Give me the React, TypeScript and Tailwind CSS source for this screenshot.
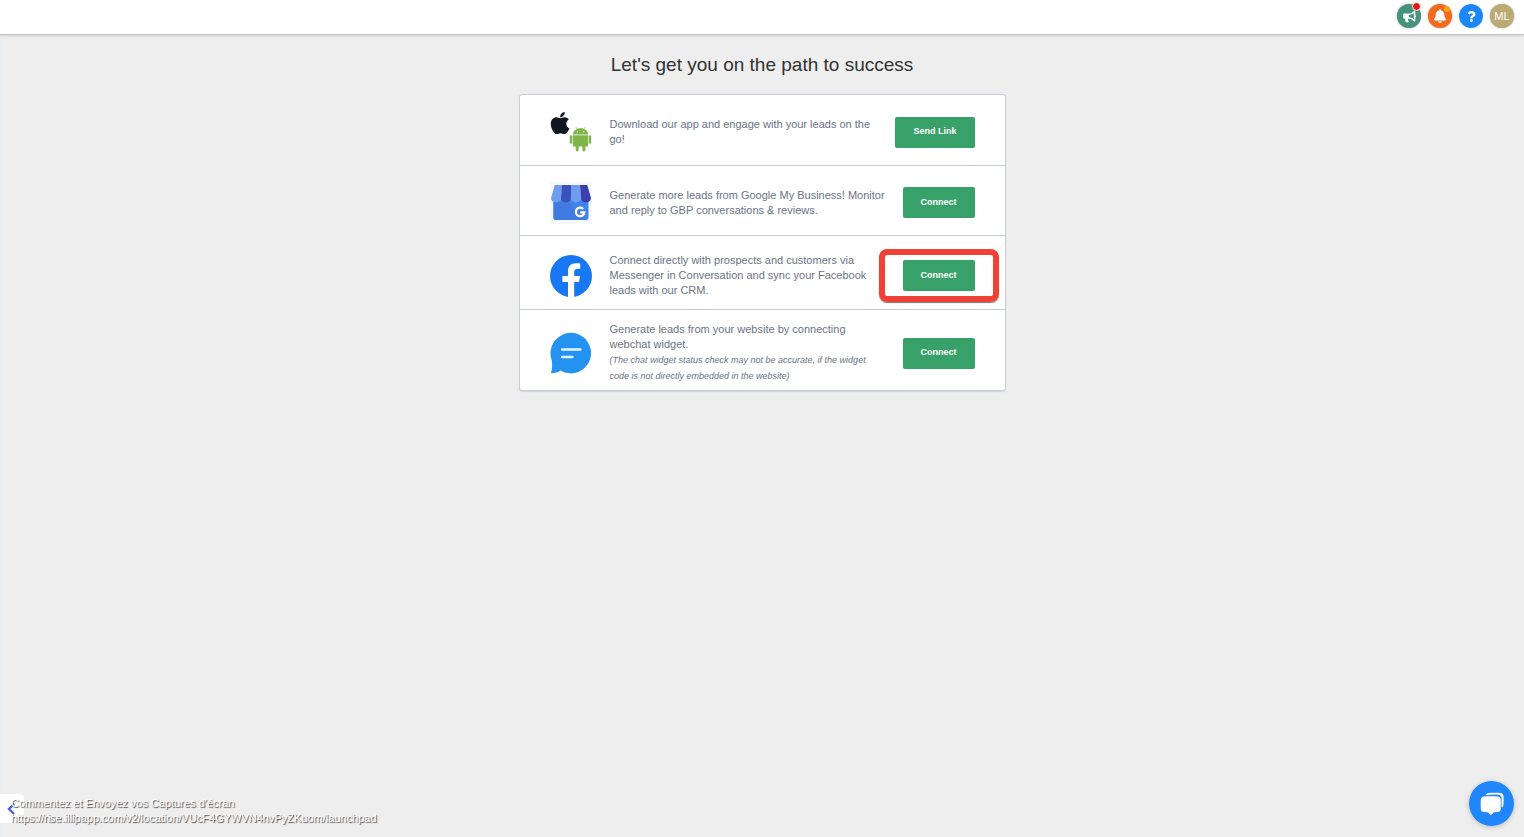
import type { ReactNode } from "react"
import { FaBell, FaBullhorn, FaQuestion } from "react-icons/fa"

function MobileIcon() {
  return (
    <svg viewBox="0 0 42 42" className="size-[42px]" aria-hidden>
      <g transform="translate(.6 -.6) scale(.0494 .0494)" fill="#10161f">
        <path d="M318.700 268.700c-.2-36.700 16.400-64.400 50-84.800-18.800-26.900-47.200-41.700-84.700-44.600-35.500-2.800-74.300 20.700-88.500 20.700-15 0-49.400-19.700-76.400-19.700C63.300 141.200 4 184.800 4 273.500q0 39.300 14.400 81.200c12.800 36.700 59 126.700 107.200 125.200 25.200-.6 43-17.900 75.800-17.900 31.800 0 48.300 17.900 76.400 17.900 48.600-.7 90.400-82.500 102.600-119.300-65.200-30.700-61.700-90-61.700-91.900zM262.100 104.500c27.300-32.400 24.800-61.900 24-72.500-24.100 1.400-52 16.400-67.900 34.900-17.500 19.800-27.800 44.300-25.600 71.900 26.100 2 49.900-11.400 69.500-34.300z" />
      </g>
      <g fill="#80b54a">
        <path d="M22.800 23.600c.3-4 3.500-6.400 7.700-6.400s7.400 2.400 7.700 6.400z" />
        <path d="m25.700 15.800 2 3M35.300 15.800l-2 3" stroke="#80b54a" strokeWidth=".6" />
        <path d="M22.800 24.300h15.400v9.700a1.500 1.500 0 0 1-1.500 1.500H24.300a1.500 1.500 0 0 1-1.500-1.500z" />
        <rect x="19.800" y="24.200" width="2.400" height="8.600" rx="1.200" />
        <rect x="38.800" y="24.200" width="2.400" height="8.600" rx="1.200" />
        <rect x="25.700" y="33" width="3" height="7.400" rx="1.300" />
        <rect x="32.400" y="33" width="3" height="7.400" rx="1.300" />
      </g>
      <circle cx="27.400" cy="20.700" r=".7" fill="#fff" />
      <circle cx="33.600" cy="20.700" r=".7" fill="#fff" />
    </svg>
  )
}

function BusinessIcon() {
  return (
    <svg viewBox="0 0 42 42" className="size-[42px]" aria-hidden>
      <path d="M0 0h42v42H0z" fill="#f7f8fb" />
      <path d="M3.500 17h35v18.500a2.500 2.500 0 0 1-2.500 2.500H6a2.500 2.500 0 0 1-2.500-2.500z" fill="#4282ea" />
      <path d="m18 20 18 18H6a2.500 2.500 0 0 1-2.500-2.500V20z" fill="#3f7be0" />
      <path d="M4.800 3h7L11 16c0 2.500-2 4.400-5 4.400S1 18.500 1 16z" fill="#6e9df0" />
      <path d="M11.800 3H21v13c0 2.500-2.200 4.400-5 4.400S11 18.500 11 16z" fill="#3b51bb" />
      <path d="M21 3h9l1 13c0 2.500-2.200 4.400-5 4.400S21 18.500 21 16z" fill="#6e9df0" />
      <path d="M30 3h7.200L41 16c0 2.500-2.200 4.400-5 4.400S31 18.500 31 16z" fill="#3a3fae" />
      <path d="M33.200 26.900a4.300 4.300 0 1 0 1.200 3.500h-4.200" fill="none" stroke="#fff" strokeWidth="2.200" />
    </svg>
  )
}

function FacebookIcon() {
  return (
    <svg viewBox="0 0 42 42" className="size-[42px]" aria-hidden>
      <circle cx="21" cy="21" r="21" fill="#1877f2" />
      <path
        d="M18 42V27.100h-5.600V21H18v-4.700c0-5.300 3.100-8.100 7.900-8.100 1.600 0 3 .1 4.300.3v5.300h-2.700c-2.400 0-3.300 1.400-3.300 3.100V21H30l-1 6.100h-4.800V42z"
        fill="#fff"
      />
    </svg>
  )
}

function WebchatIcon() {
  return (
    <svg viewBox="0 0 42 42" className="size-[42px]" aria-hidden>
      <path
        d="M21 .8A20.300 20.300 0 1 1 10.500 38.600C8 40.600 4 41.500.8 41.200 2.300 37.500 2.300 33 1.800 28.500A20.500 20.500 0 0 1 21 .8z"
        fill="#2492f0"
      />
      <path d="M12 17.500h18.500M12 25h10.500" stroke="#e8f7ff" strokeWidth="2.300" strokeLinecap="round" />
    </svg>
  )
}

type Step = {
  icon: ReactNode
  text: string
  note?: string
  action: string
  row: string
  highlighted?: boolean
}

const steps: Step[] = [
  {
    icon: <MobileIcon />,
    text: "Download our app and engage with your leads on the go!",
    action: "Send Link",
    row: "min-h-[71px] pt-1",
  },
  {
    icon: <BusinessIcon />,
    text: "Generate more leads from Google My Business! Monitor and reply to GBP conversations & reviews.",
    action: "Connect",
    row: "min-h-[70px] pt-1",
  },
  {
    icon: <FacebookIcon />,
    text: "Connect directly with prospects and customers via Messenger in Conversation and sync your Facebook leads with our CRM.",
    action: "Connect",
    row: "min-h-[74px] pt-1.5",
    highlighted: true,
  },
  {
    icon: <WebchatIcon />,
    text: "Generate leads from your website by connecting webchat widget.",
    note: "(The chat widget status check may not be accurate, if the widget code is not directly embedded in the website)",
    action: "Connect",
    row: "min-h-[80px] pt-1.5",
  },
]

function StepRow({ icon, text, note, action, row, highlighted }: Step) {
  return (
    <li className={`flex items-center px-[30px] ${row}`}>
      <div className="shrink-0">{icon}</div>
      <div className="ml-[18px] w-[277px] text-[11px] leading-[15px] text-[#6b7385]">
        <p>{text}</p>
        {note && <p className="text-[9px] leading-4 italic">{note}</p>}
      </div>
      <div className="relative ml-auto shrink-0">
        <button
          type="button"
          className="block h-[31px] rounded-xs bg-[#38a169] px-[18px] text-[9px] font-bold text-white"
        >
          {action}
        </button>
        {highlighted && (
          <span
            className="pointer-events-none absolute -inset-x-6 -inset-y-[11px] rounded-lg border-6 border-[#ef4136] shadow-[0_1px_1px_#777]"
            aria-hidden
          />
        )}
      </div>
    </li>
  )
}

export default function App() {
  return (
    <div className="relative flex min-h-screen flex-col bg-[#eeeeee] font-['Liberation_Sans',Arial,sans-serif] shadow-[inset_1px_0_0_#e3eef7]">
      <header className="flex h-[35px] items-center justify-end gap-[7px] border-b border-[#c4c4c4] bg-white px-[10px] pb-0.5 shadow-[0_1px_2px_#d0d0d0]">
        <button
          type="button"
          aria-label="Announcements"
          className="relative grid size-6 place-items-center rounded-full bg-[#46937b] text-white shadow-[0_0_2px_#999]"
        >
          <FaBullhorn size={13} />
          <span className="absolute -top-0.5 right-0 size-[9px] rounded-full border border-white bg-[#e81313]" />
        </button>
        <button
          type="button"
          aria-label="Notifications"
          className="relative grid size-6 place-items-center rounded-full bg-[#f56a1d] text-white shadow-[0_0_2px_#999]"
        >
          <FaBell size={14} />
          <span className="absolute top-0.5 right-0.5 size-1.5 rounded-full bg-[#fba21c]" />
        </button>
        <button
          type="button"
          aria-label="Help"
          className="grid size-6 place-items-center rounded-full bg-[#1b87fb] text-white"
        >
          <FaQuestion size={11} />
        </button>
        <button
          type="button"
          className="grid size-6 place-items-center rounded-full bg-[#bbab72] text-[11px] text-white shadow-[0_0_2px_#999]"
        >
          ML
        </button>
      </header>

      <main className="flex flex-col items-center pt-[18px]">
        <h1 className="text-[19px] leading-6 text-[#333333]">Let's get you on the path to success</h1>
        <ul className="mt-[17px] w-full max-w-[487px] divide-y divide-[#c9cfd6] rounded-[3px] border border-[#c9cfd6] bg-white shadow-[0_1px_1px_#cfd3da]">
          {steps.map((step) => (
            <StepRow key={step.text} {...step} />
          ))}
        </ul>
      </main>

      <button
        type="button"
        aria-label="Expand menu"
        className="absolute bottom-[14px] left-0 flex h-[29px] w-6 items-center rounded-r-sm bg-white pl-[7px]"
      >
        <svg viewBox="0 0 8 12" className="h-3 w-2" aria-hidden>
          <path d="M7 1 2 6l5 5" fill="none" stroke="#4d62d9" strokeWidth="2.400" />
        </svg>
      </button>
      <div className="absolute bottom-[11px] left-[11px] text-[11px] leading-[15px] text-white [text-shadow:1px_1px_1px_#444]">
        <p>Commentez et Envoyez vos Captures d'écran</p>
        <p>https://rise.illipapp.com/v2/location/VUcF4GYWVN4nvPyZKuom/launchpad</p>
      </div>

      <button
        type="button"
        aria-label="Open chat"
        className="absolute right-[10px] bottom-[11px] grid size-[45px] place-items-center rounded-full bg-[#1f86fc] shadow-[0_1px_5px_#bbb]"
      >
        <svg viewBox="0 0 24 24" className="size-6" aria-hidden>
          <path
            d="M5.500 3.200C6 1.700 7.200 1 8.800.9c3.900-.3 7.900-.3 11.700 0 1.800.2 2.800 1.200 3 3 .2 3 .2 6-.1 9-.1 1.300-.7 2.200-1.800 2.600V6.200c0-2.200-1.200-3.400-3.300-3.500-4.200-.3-8.400-.1-12.800.5z"
            fill="#fff"
          />
          <path
            d="M4 4.500c4.400-.5 9-.5 13.500 0 2 .2 3.100 1.300 3.200 3.200.2 3 .2 6.200 0 9.200-.1 1.900-1.200 2.900-3.200 3.100l-3.700.3-3 3-3-3-3.800-.3c-2-.2-3.100-1.200-3.200-3.100-.2-3-.2-6.200 0-9.200.1-1.900 1.200-3 3.200-3.200z"
            fill="#fff"
          />
        </svg>
      </button>
    </div>
  )
}
